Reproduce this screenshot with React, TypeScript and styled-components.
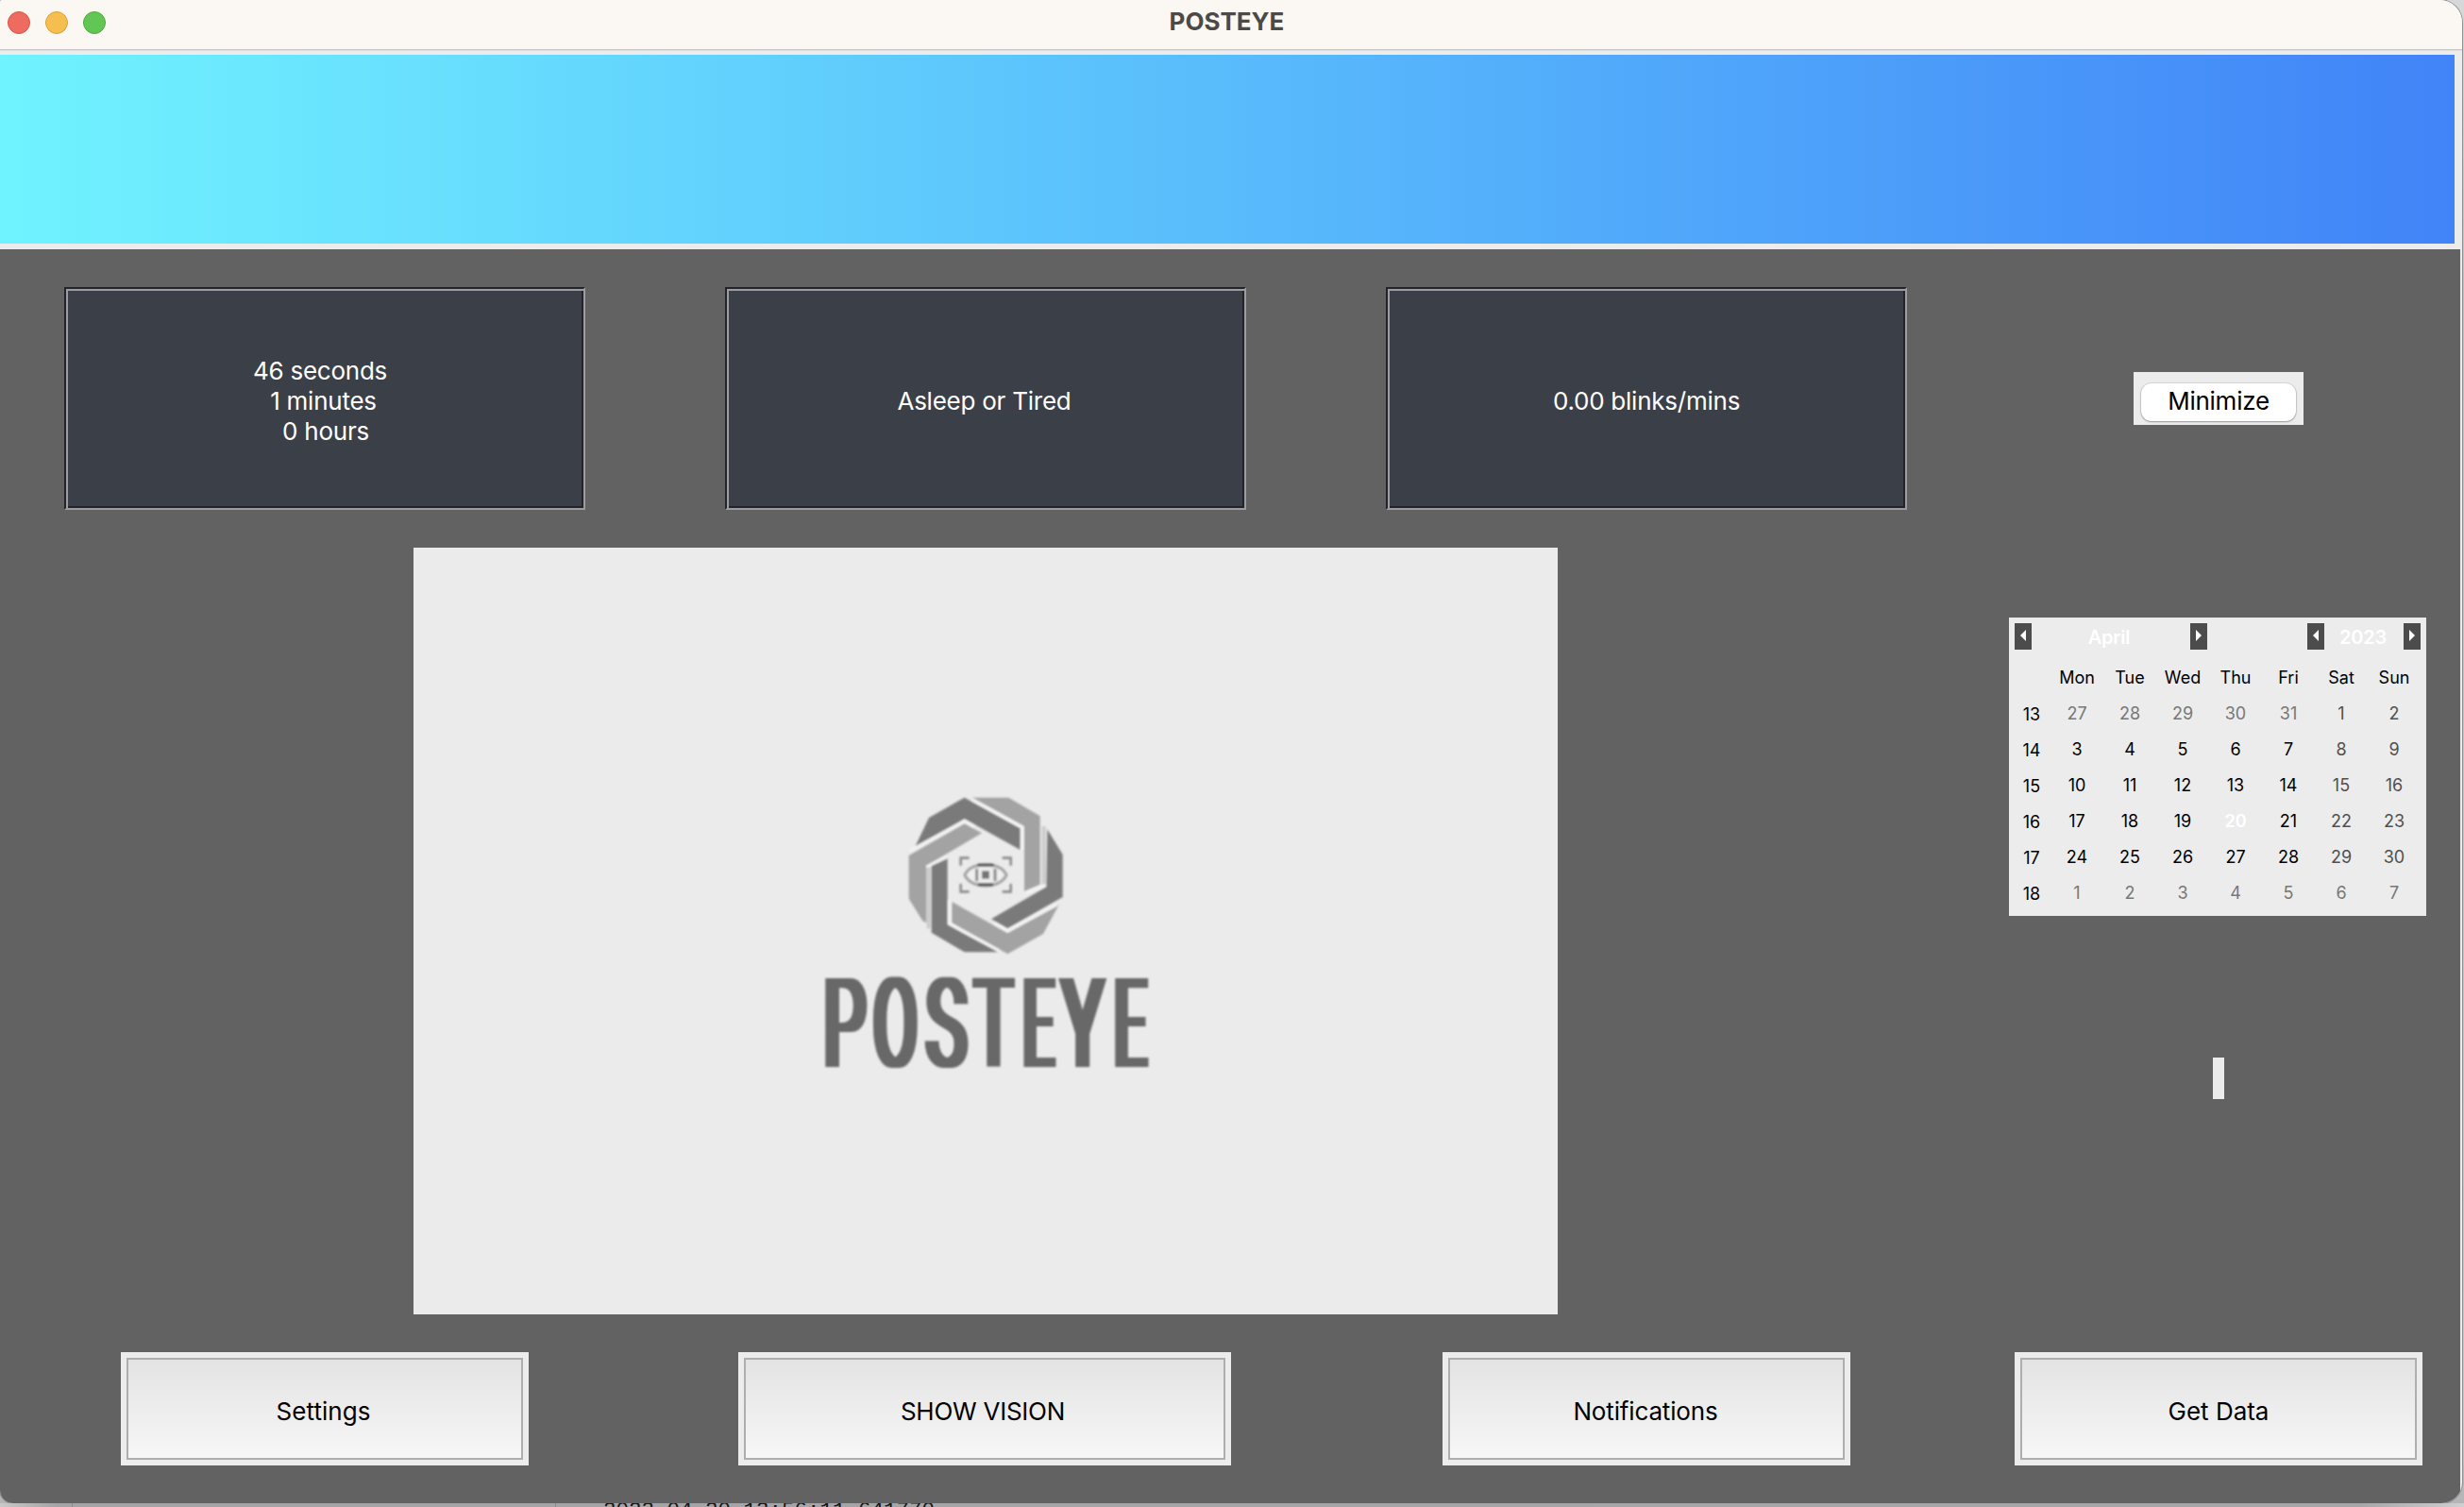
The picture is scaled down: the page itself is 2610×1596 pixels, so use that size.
import React from 'react';
import styled, { createGlobalStyle } from 'styled-components';

const GlobalStyle = createGlobalStyle`
  * { box-sizing: border-box; }
  html, body { margin: 0; padding: 0; overflow: hidden; }
  body { font-family: Inter, Roboto, "Liberation Sans", sans-serif; }
`;

const Desktop = styled.div`
  width: 2610px;
  height: 1596px;
  display: flex;
  flex-direction: column;
  overflow: hidden;
  background: linear-gradient(to bottom, #d6d8d9 0, #bdbdbf 300px, #c4c4c6 1500px, #b4b4b6 1596px);
`;

const AppWindow = styled.div`
  width: 2608px;
  height: 1592px;
  flex: none;
  display: flex;
  flex-direction: column;
  overflow: hidden;
  background: #ececec;
  border-radius: 2px 24px 22px 14px;
  box-shadow: 0 0 0 1px #8f8f8f;
`;

const TitleBar = styled.header`
  height: 53px;
  flex: none;
  display: grid;
  grid-template-columns: 200px 1fr 200px;
  background: #fbf7f2;
  border-bottom: 1px solid #c6c6c6;
`;

const Lights = styled.div`
  display: flex;
  gap: 16px;
  padding: 12px 0 0 8px;
`;

const Light = styled.span<{ $fill: string; $edge: string }>`
  width: 24px;
  height: 24px;
  border-radius: 50%;
  background: ${(p) => p.$fill};
  border: 1px solid ${(p) => p.$edge};
`;

const Title = styled.h1`
  margin: 0;
  padding: 7px 9px 0 0;
  text-align: center;
  font-size: 26px;
  line-height: 32px;
  font-weight: 700;
  color: #4c4947;
`;

const Banner = styled.div`
  height: 211px;
  flex: none;
  padding: 4px 8px 6px 0;
  background: #ececec;
  border-top: 1px solid #dedede;
`;

const BannerFill = styled.div`
  height: 200px;
  background: linear-gradient(to right, #70f3ff, #4184f8);
`;

const Content = styled.main`
  flex: 1;
  margin-right: 2px;
  background: #626262;
  display: grid;
  grid-template-columns: 694px 700px 700px 512px;
  grid-template-rows: 316px 812px 200px;
`;

const Cell = styled.div<{ $nudge?: number }>`
  display: flex;
  align-items: center;
  justify-content: center;
  padding-right: ${(p) => p.$nudge ?? 0}px;
`;

const TopCell = styled(Cell)`
  height: 316px;
`;

const Readout = styled.section`
  width: 552px;
  height: 236px;
  padding-top: 6px;
  display: flex;
  flex-direction: column;
  align-items: center;
  justify-content: center;
  background: #3b3f47;
  border: 2px solid;
  border-color: #222429 #9b9da1 #9b9da1 #222429;
  box-shadow: inset 2px 2px 0 #9b9da1, inset -2px -2px 0 #222429;
`;

const ReadoutLine = styled.div<{ $before?: number; $after?: number }>`
  font-size: 26px;
  line-height: 32px;
  letter-spacing: -0.24px;
  color: #ffffff;
  padding-left: ${(p) => p.$before ?? 0}px;
  padding-right: ${(p) => p.$after ?? 0}px;
`;

const SmallButtonTray = styled.div`
  width: 180px;
  height: 56px;
  padding: 12px 8px 4px;
  background: #ececec;
`;

const SmallButton = styled.button`
  width: 164px;
  height: 40px;
  padding: 0 0 2px;
  border: 0;
  border-radius: 11px;
  background: #ffffff;
  box-shadow: 0 0 0 1px rgba(0, 0, 0, 0.09), 0 1px 2px rgba(0, 0, 0, 0.3);
  font: 400 26px/32px Inter, sans-serif;
  letter-spacing: -0.25px;
  color: #000000;
`;

const Stage = styled.div`
  grid-column: 1 / 4;
  display: flex;
  justify-content: center;
  padding-right: 6px;
`;

const VisionPanel = styled.div`
  width: 1212px;
  height: 812px;
  padding: 240px 0 0 402px;
  background: #ebebeb;
`;

const Sidebar = styled.aside`
  display: grid;
  grid-template-rows: 464px 196px 152px;
  justify-items: center;
  align-items: center;
`;

const Calendar = styled.div`
  width: 442px;
  height: 316px;
  margin-right: 2px;
  padding: 6px;
  background: #ececec;
`;

const CalendarNav = styled.div`
  height: 38px;
  display: grid;
  grid-template-columns: 18px 168px 18px 106px 18px 84px 18px;
  align-items: start;
`;

const Arrow = styled.button`
  height: 28px;
  padding: 0 0 2px;
  border: 0;
  display: flex;
  align-items: center;
  justify-content: center;
  background: #4c4c4c;
`;

const NavLabel = styled.span<{ $after?: number }>`
  padding-top: 2px;
  padding-right: ${(p) => p.$after ?? 0}px;
  text-align: center;
  font-size: 20px;
  line-height: 26px;
  font-weight: 600;
  letter-spacing: -0.2px;
  color: #ffffff;
`;

const Week = styled.div`
  height: 38px;
  display: grid;
  grid-template-columns: 38px repeat(7, 56px);
`;

type Tone = 'normal' | 'weekend' | 'other' | 'today' | 'week';

const toneColor: Record<Tone, string> = {
  normal: '#000000',
  weekend: '#505050',
  other: '#777777',
  today: '#ffffff',
  week: '#000000',
};

const Day = styled.span<{ $tone: Tone }>`
  padding-top: ${(p) => (p.$tone === 'week' ? '3px' : '1px')};
  padding-right: ${(p) => (p.$tone === 'week' ? '2px' : '0')};
  text-align: center;
  font-size: 18px;
  line-height: ${(p) => (p.$tone === 'week' ? '36px' : '37px')};
  font-weight: ${(p) => (p.$tone === 'today' ? 600 : 400)};
  color: ${(p) => toneColor[p.$tone]};
`;

const Indicator = styled.div`
  width: 12px;
  height: 44px;
  background: #ececec;
`;

const ActionTray = styled.div<{ $width: number }>`
  width: ${(p) => p.$width}px;
  height: 120px;
  padding: 6px;
  background: #ececec;
`;

const ActionButton = styled.button<{ $tracking?: number; $after?: number }>`
  width: 100%;
  height: 108px;
  padding: 5px ${(p) => p.$after ?? 0}px 0 0;
  border: 2px solid #aeaeae;
  background: linear-gradient(to bottom, #e3e3e3, #f7f7f7);
  font: 400 26px/32px Inter, sans-serif;
  letter-spacing: ${(p) => p.$tracking ?? 0}px;
  color: #000000;
`;

const Backdrop = styled.div`
  height: 4px;
  flex: none;
  display: grid;
  grid-template-columns: 77px 512px 1fr;
  overflow: hidden;
  background: linear-gradient(to right, #c9c9c9 0, #a4a4a6 60px, #a6a6a8 2500px, #cfcfd1 2610px);
`;

const BackdropPane = styled.div`
  border-right: 1px solid #8a8a8c;
`;

const LogText = styled.div`
  margin-top: -5px;
  padding-left: 50px;
  font: 400 22.5px/26px "Liberation Mono", monospace;
  color: #161616;
  white-space: pre;
`;

function ArrowGlyph({ flip }: { flip?: boolean }) {
  return (
    <svg width="6" height="12" viewBox="0 0 6 12">
      <path d={flip ? 'M0 0L6 6L0 12Z' : 'M6 0L0 6L6 12Z'} fill="#ffffff" />
    </svg>
  );
}

const DARK = '#7a7a7a';
const LIGHT = '#a3a3a3';

function Logo() {
  return (
    <svg width="410" height="370" viewBox="0 0 1230 1110">
      <defs>
        <filter id="soft" x="-5%" y="-5%" width="110%" height="110%">
          <feGaussianBlur stdDeviation="2.6" />
        </filter>
        <filter id="widen" x="-5%" y="-10%" width="110%" height="120%">
          <feMorphology operator="dilate" radius="12 0" />
          <feGaussianBlur stdDeviation="2.6" />
        </filter>
      </defs>
      <g filter="url(#soft)">
        <path d="M388 230L432 138L545 74L722 172V240L545 142Z" fill={DARK} />
        <path d="M570 74H685L785 133V350L735 372V165Z" fill={LIGHT} />
        <path d="M808 175L857 255V390L682 490L630 460L805 358Z" fill={DARK} />
        <path d="M845 415L795 507L682 571L505 472V405L682 505Z" fill={LIGHT} />
        <path d="M440 288L491 266V478L652 565H545L440 503Z" fill={DARK} />
        <path d="M368 258L545 157L600 187L424 290V472L412 466L368 395Z" fill={LIGHT} />
        <path d="M797 165V352M431 290V490" stroke="#cbcbcb" strokeWidth="12" fill="none" />
        <path
          d="M372 242L545 148L575 166M570 82L728 168V240M740 376L802 352M838 415L682 498L640 474M496 400V474L655 560M424 294L488 264"
          stroke="#f5f5f5"
          strokeWidth="8"
          fill="none"
        />
        <path
          d="M533 290V266H560M665 266H692V290M692 348V373H665M560 373H533V348"
          stroke="#8d8d8d"
          strokeWidth="8"
          fill="none"
        />
        <path
          d="M546 320Q560 288 612 287Q664 288 678 320Q664 352 612 354Q560 352 546 320Z"
          stroke="#a0a0a0"
          strokeWidth="9"
          fill="#efefef"
        />
        <path d="M586 289H638M588 350H636" stroke="#4c4c4c" strokeWidth="9" fill="none" />
        <path d="M584 300V340M642 300V340" stroke="#858585" strokeWidth="9" fill="none" />
        <rect x="600" y="307" width="24" height="25" fill="#757575" />
      </g>
      <g filter="url(#widen)">
        <text
          transform="scale(0.5 1)"
          y="930"
          fontFamily="Roboto, sans-serif"
          fontWeight="400"
          fontSize="394"
          fill="#686868"
        >
          <tspan x="195" textLength="267" lengthAdjust="spacingAndGlyphs">P</tspan>
          <tspan x="510" textLength="280" lengthAdjust="spacingAndGlyphs">O</tspan>
          <tspan x="844" textLength="261" lengthAdjust="spacingAndGlyphs">S</tspan>
          <tspan x="1154" textLength="242" lengthAdjust="spacingAndGlyphs">T</tspan>
          <tspan x="1462" textLength="196" lengthAdjust="spacingAndGlyphs">E</tspan>
          <tspan x="1707" textLength="267" lengthAdjust="spacingAndGlyphs">Y</tspan>
          <tspan x="2041" textLength="206" lengthAdjust="spacingAndGlyphs">E</tspan>
        </text>
      </g>
    </svg>
  );
}

const weekdays = ['Mon', 'Tue', 'Wed', 'Thu', 'Fri', 'Sat', 'Sun'];

const weeks = [
  { no: 13, days: [27, 28, 29, 30, 31, 1, 2] },
  { no: 14, days: [3, 4, 5, 6, 7, 8, 9] },
  { no: 15, days: [10, 11, 12, 13, 14, 15, 16] },
  { no: 16, days: [17, 18, 19, 20, 21, 22, 23] },
  { no: 17, days: [24, 25, 26, 27, 28, 29, 30] },
  { no: 18, days: [1, 2, 3, 4, 5, 6, 7] },
];

function toneFor(week: number, col: number, day: number): Tone {
  if (week === 18 || (week === 13 && day > 20)) return 'other';
  if (week === 16 && day === 20) return 'today';
  return col > 4 ? 'weekend' : 'normal';
}

export default function App() {
  return (
    <>
      <GlobalStyle />
      <Desktop>
        <AppWindow>
          <TitleBar>
            <Lights>
              <Light $fill="#ed6b5f" $edge="#d9544a" />
              <Light $fill="#f5bf4f" $edge="#d8a03c" />
              <Light $fill="#62c655" $edge="#4fa73f" />
            </Lights>
            <Title>POSTEYE</Title>
          </TitleBar>
          <Banner>
            <BannerFill />
          </Banner>
          <Content>
            <TopCell $nudge={6}>
              <Readout>
                <ReadoutLine $after={10}>46 seconds</ReadoutLine>
                <ReadoutLine $after={3}>1 minutes</ReadoutLine>
                <ReadoutLine $before={2}>0 hours</ReadoutLine>
              </Readout>
            </TopCell>
            <TopCell>
              <Readout>
                <ReadoutLine $after={3}>Asleep or Tired</ReadoutLine>
              </Readout>
            </TopCell>
            <TopCell>
              <Readout>
                <ReadoutLine>0.00 blinks/mins</ReadoutLine>
              </Readout>
            </TopCell>
            <TopCell>
              <SmallButtonTray>
                <SmallButton>Minimize</SmallButton>
              </SmallButtonTray>
            </TopCell>

            <Stage>
              <VisionPanel>
                <Logo />
              </VisionPanel>
            </Stage>
            <Sidebar>
              <Calendar>
                <CalendarNav>
                  <Arrow><ArrowGlyph /></Arrow>
                  <NavLabel $after={4}>April</NavLabel>
                  <Arrow><ArrowGlyph flip /></Arrow>
                  <span />
                  <Arrow><ArrowGlyph /></Arrow>
                  <NavLabel $after={2}>2023</NavLabel>
                  <Arrow><ArrowGlyph flip /></Arrow>
                </CalendarNav>
                <Week>
                  <span />
                  {weekdays.map((d) => (
                    <Day key={d} $tone="normal">{d}</Day>
                  ))}
                </Week>
                {weeks.map((w) => (
                  <Week key={w.no}>
                    <Day $tone="week">{w.no}</Day>
                    {w.days.map((d, i) => (
                      <Day key={i} $tone={toneFor(w.no, i, d)}>{d}</Day>
                    ))}
                  </Week>
                ))}
              </Calendar>
              <Indicator />
            </Sidebar>

            <Cell $nudge={6}>
              <ActionTray $width={432}>
                <ActionButton $tracking={0.05} $after={3}>Settings</ActionButton>
              </ActionTray>
            </Cell>
            <Cell $nudge={2}>
              <ActionTray $width={522}>
                <ActionButton $tracking={-0.25} $after={4}>SHOW VISION</ActionButton>
              </ActionTray>
            </Cell>
            <Cell>
              <ActionTray $width={432}>
                <ActionButton $tracking={-0.15} $after={2}>Notifications</ActionButton>
              </ActionTray>
            </Cell>
            <Cell>
              <ActionTray $width={432}>
                <ActionButton>Get Data</ActionButton>
              </ActionTray>
            </Cell>
          </Content>
        </AppWindow>
        <Backdrop>
          <BackdropPane />
          <BackdropPane />
          <LogText>2023-04-20 13:56:11.641770</LogText>
        </Backdrop>
      </Desktop>
    </>
  );
}
